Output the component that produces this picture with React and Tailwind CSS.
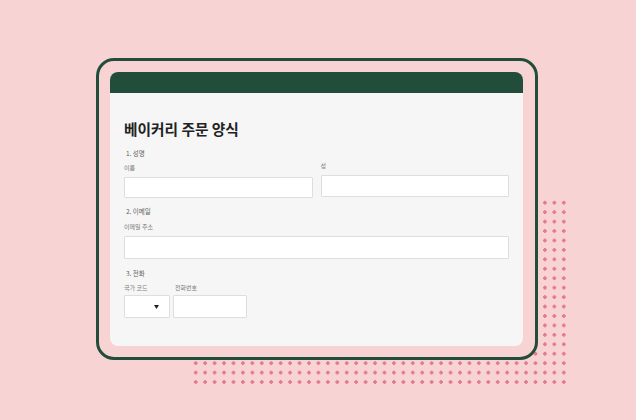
const labelNum = "block h-[10px] leading-[10px] text-[6.5px] text-[#5e5e5e]";
const labelSub = "block h-[10px] leading-[10px] text-[6px] text-[#7a7a7a]";
const inputBox = "bg-white border border-[#dedede] rounded-[1px]";

export default function App() {
  return (
    <div
      className="relative w-[636px] h-[420px] overflow-hidden bg-[#f8d3d4]"
      style={{ fontFamily: '"Noto Sans CJK KR", "Noto Sans", sans-serif' }}
    >
      {/* dot pattern behind the frame */}
      <div className="absolute left-[191px] top-[198px] w-[378px] h-[189px] bg-[radial-gradient(circle,#e57a8e_1.6px,transparent_1.9px)] bg-[length:9.45px_9.45px]" />

      <div className="relative z-10 ml-[96px] mt-[58px] w-[442px] h-[302px] rounded-[18px] border-[3px] border-[#224d3b] bg-[#f8d3d4] p-[11px]">
        <div className="h-[274px] w-[413px] rounded-[8px] bg-[#f6f6f6] overflow-hidden">
          <div className="h-[21px] bg-[#224d3b]" />
          <div className="px-[14px] pt-[26px]">
            <h1 className="h-[20px] leading-[20px] text-[14.7px] font-bold text-[#222]">베이커리 주문 양식</h1>

            <span className={`${labelNum} mt-[9px] pl-[2px]`}>1. 성명</span>
            <div className="grid grid-cols-2 gap-[8px]">
              <div>
                <span className={`${labelSub} mt-[5px]`}>이름</span>
                <div className={`${inputBox} mt-[4px] h-[21px]`} />
              </div>
              <div>
                <span className={`${labelSub} mt-[3px]`}>성</span>
                <div className={`${inputBox} mt-[4px] h-[22px]`} />
              </div>
            </div>

            <span className={`${labelNum} mt-[8px] pl-[2px]`}>2. 이메일</span>
            <span className={`${labelSub} mt-[6px]`}>이메일 주소</span>
            <div className={`${inputBox} mt-[4px] h-[23px]`} />

            <span className={`${labelNum} mt-[9px] pl-[2px]`}>3. 전화</span>
            <div className="flex gap-[3px]">
              <div className="w-[46px]">
                <span className={`${labelSub} mt-[5px]`}>국가 코드</span>
                <div className={`${inputBox} mt-[2px] h-[23px] flex items-center justify-end pr-[10px]`}>
                  <svg width="5" height="4" viewBox="0 0 5 4">
                    <path d="M0 0H5L2.5 4Z" fill="#222" />
                  </svg>
                </div>
              </div>
              <div className="w-[74px]">
                <span className={`${labelSub} mt-[5px] pl-[2px]`}>전화번호</span>
                <div className={`${inputBox} mt-[2px] h-[23px]`} />
              </div>
            </div>
          </div>
        </div>
      </div>
    </div>
  );
}
